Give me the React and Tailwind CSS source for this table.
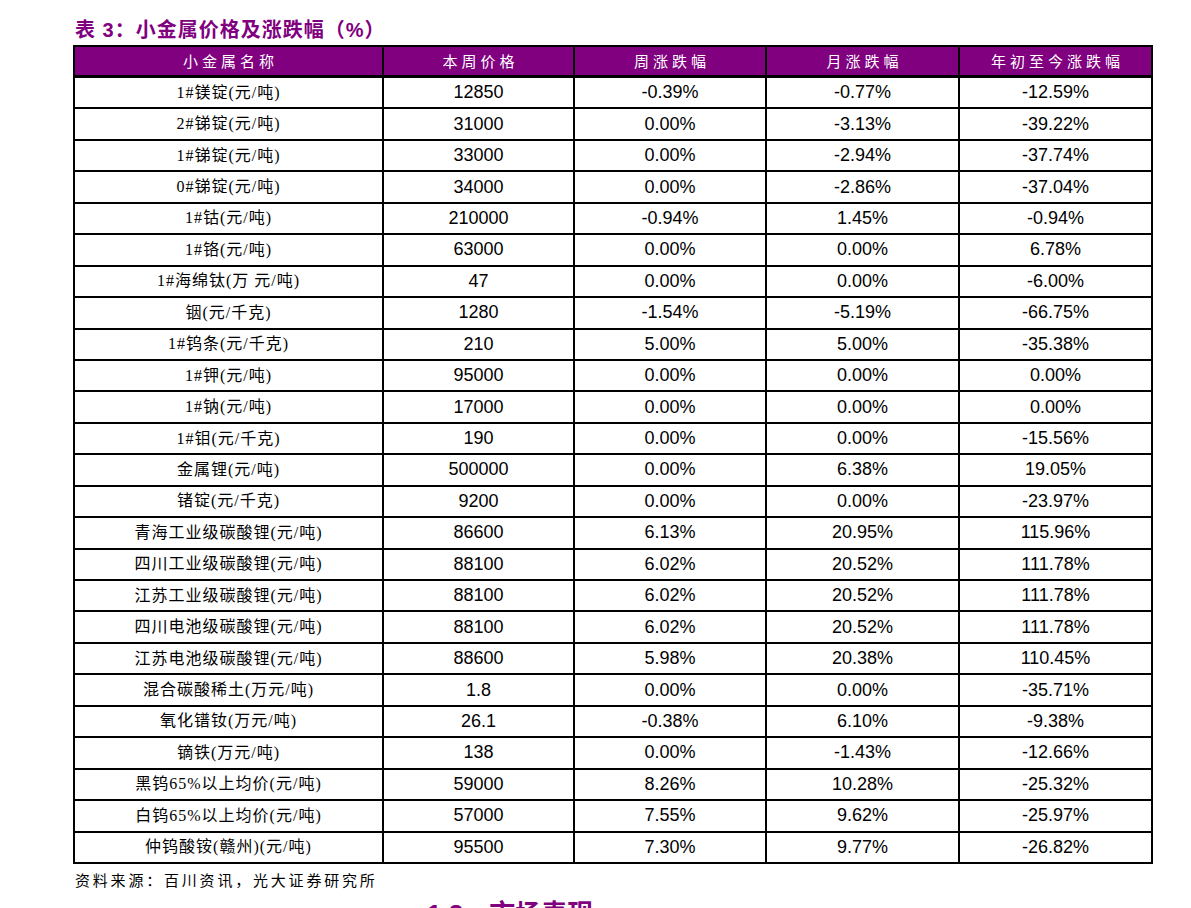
import React from "react";

const rows = [
  ["1#镁锭(元/吨)", "12850", "-0.39%", "-0.77%", "-12.59%"],
  ["2#锑锭(元/吨)", "31000", "0.00%", "-3.13%", "-39.22%"],
  ["1#锑锭(元/吨)", "33000", "0.00%", "-2.94%", "-37.74%"],
  ["0#锑锭(元/吨)", "34000", "0.00%", "-2.86%", "-37.04%"],
  ["1#钴(元/吨)", "210000", "-0.94%", "1.45%", "-0.94%"],
  ["1#铬(元/吨)", "63000", "0.00%", "0.00%", "6.78%"],
  ["1#海绵钛(万 元/吨)", "47", "0.00%", "0.00%", "-6.00%"],
  ["铟(元/千克)", "1280", "-1.54%", "-5.19%", "-66.75%"],
  ["1#钨条(元/千克)", "210", "5.00%", "5.00%", "-35.38%"],
  ["1#钾(元/吨)", "95000", "0.00%", "0.00%", "0.00%"],
  ["1#钠(元/吨)", "17000", "0.00%", "0.00%", "0.00%"],
  ["1#钼(元/千克)", "190", "0.00%", "0.00%", "-15.56%"],
  ["金属锂(元/吨)", "500000", "0.00%", "6.38%", "19.05%"],
  ["锗锭(元/千克)", "9200", "0.00%", "0.00%", "-23.97%"],
  ["青海工业级碳酸锂(元/吨)", "86600", "6.13%", "20.95%", "115.96%"],
  ["四川工业级碳酸锂(元/吨)", "88100", "6.02%", "20.52%", "111.78%"],
  ["江苏工业级碳酸锂(元/吨)", "88100", "6.02%", "20.52%", "111.78%"],
  ["四川电池级碳酸锂(元/吨)", "88100", "6.02%", "20.52%", "111.78%"],
  ["江苏电池级碳酸锂(元/吨)", "88600", "5.98%", "20.38%", "110.45%"],
  ["混合碳酸稀土(万元/吨)", "1.8", "0.00%", "0.00%", "-35.71%"],
  ["氧化镨钕(万元/吨)", "26.1", "-0.38%", "6.10%", "-9.38%"],
  ["镝铁(万元/吨)", "138", "0.00%", "-1.43%", "-12.66%"],
  ["黑钨65%以上均价(元/吨)", "59000", "8.26%", "10.28%", "-25.32%"],
  ["白钨65%以上均价(元/吨)", "57000", "7.55%", "9.62%", "-25.97%"],
  ["仲钨酸铵(赣州)(元/吨)", "95500", "7.30%", "9.77%", "-26.82%"],
];

const headers = ["小金属名称", "本周价格", "周涨跌幅", "月涨跌幅", "年初至今涨跌幅"];

// column widths include each cell's 2px right border
const cols = "grid grid-cols-[309px_191px_192px_193px_191px]";

export default function App() {
  return (
    <div className="w-[1191px] h-[908px] overflow-hidden bg-white pl-[73px] pt-[18px]">
      <div className="h-[24px] pl-[2px] text-[20px] leading-[24px] font-bold tracking-[1px] text-[#80007f] font-['Liberation_Sans','Noto_Sans_CJK_SC',sans-serif]">
        表 3：小金属价格及涨跌幅（%）
      </div>

      <div className="mt-[3px] w-[1080px] border-2 border-black">
        <div className={`${cols} h-[31px] border-b-[3px] border-black bg-[#800080]`}>
          {headers.map((h, i) => (
            <div
              key={i}
              className={`flex items-center justify-center pl-[4px] text-[15px] tracking-[4px] text-white font-['Noto_Sans_CJK_SC',sans-serif] ${
                i < 4 ? "border-r-2 border-black" : ""
              }`}
            >
              {h}
            </div>
          ))}
        </div>
        {rows.map((r, ri) => (
          <div
            key={ri}
            className={`${cols} ${ri < rows.length - 1 ? "h-[31.44px] border-b-2 border-black" : "h-[29.44px]"}`}
          >
            {r.map((c, ci) => (
              <div
                key={ci}
                className={`flex items-center justify-center text-black ${
                  ci < 4 ? "border-r-2 border-black" : ""
                } ${
                  ci === 0
                    ? "text-[16px] tracking-[1px] font-['Liberation_Serif','Noto_Sans_CJK_SC',serif]"
                    : "text-[18px] font-['Liberation_Sans',Arial,sans-serif]"
                }`}
              >
                {c}
              </div>
            ))}
          </div>
        ))}
      </div>

      <div className="mt-[6px] pl-[2px] text-[15px] leading-[20px] tracking-[2.8px] text-black font-['Noto_Sans_CJK_SC',sans-serif]">
        资料来源：百川资讯，光大证券研究所
      </div>

      <div className="mt-[9px] ml-[354px] text-[26px] leading-[30px] font-bold text-[#80007f] font-['Liberation_Sans','Noto_Sans_CJK_SC',sans-serif]">
        1.2、市场表现
      </div>
    </div>
  );
}
